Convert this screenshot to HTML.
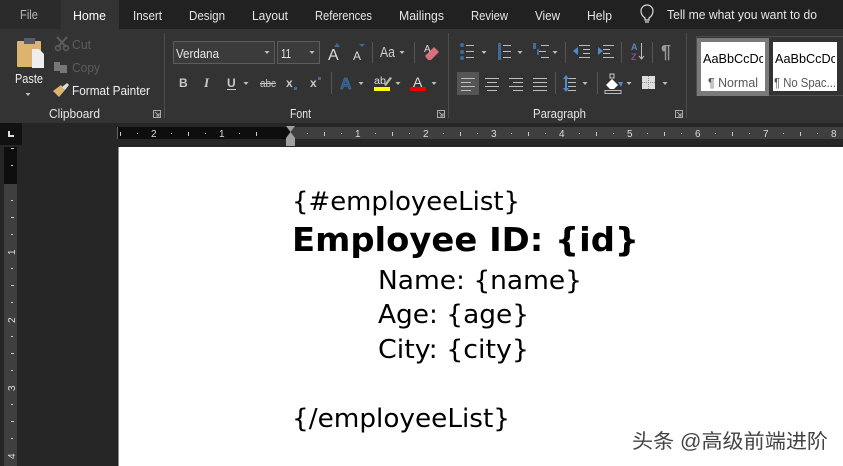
<!DOCTYPE html>
<html><head><meta charset="utf-8"><style>
html,body{margin:0;padding:0;background:#262626;overflow:hidden}
svg{display:block}
text{font-family:"Liberation Sans","Noto Sans CJK SC",sans-serif;fill:#e6e6e6;font-size:13px}
.d{font-family:"DejaVu Sans",sans-serif;fill:#000}
.r{font-size:10px;fill:#ddd}
.l{stroke:#bdbdbd;stroke-width:1;fill:none}
.b{fill:#3f6a9c}
</style></head><body>
<svg xmlns="http://www.w3.org/2000/svg" width="843" height="466" viewBox="0 0 843 466">
<defs><path id="a" d="M0.500 0h5l-2.500 3z" fill="#bdbdbd"/></defs>
<rect width="843" height="466" fill="#262626"/>
<rect width="843" height="29" fill="#212121"/>
<rect width="61" height="29" fill="#2b2b2b"/>
<rect x="61" width="58" height="29" fill="#333"/>
<rect y="29" width="843" height="94" fill="#333"/>
<text x="20" y="19" textLength="18" lengthAdjust="spacingAndGlyphs" style="fill:#b5b5b5">File</text>
<text x="73" y="20" textLength="33" lengthAdjust="spacingAndGlyphs" style="fill:#fff">Home</text>
<text x="133" y="20" textLength="29" lengthAdjust="spacingAndGlyphs">Insert</text>
<text x="189" y="20" textLength="36" lengthAdjust="spacingAndGlyphs">Design</text>
<text x="252" y="20" textLength="36" lengthAdjust="spacingAndGlyphs">Layout</text>
<text x="315" y="20" textLength="57" lengthAdjust="spacingAndGlyphs">References</text>
<text x="399" y="20" textLength="45" lengthAdjust="spacingAndGlyphs">Mailings</text>
<text x="471" y="20" textLength="37" lengthAdjust="spacingAndGlyphs">Review</text>
<text x="535" y="20" textLength="25" lengthAdjust="spacingAndGlyphs">View</text>
<text x="587" y="20" textLength="25" lengthAdjust="spacingAndGlyphs">Help</text>
<text x="667" y="19" textLength="150" lengthAdjust="spacingAndGlyphs">Tell me what you want to do</text>
<path d="M645 18c-3-2-4-4-4-7a6 6 0 0 1 12 0c0 3-1 5-4 7v2h-4zM645 22h4" fill="none" stroke="#ddd" stroke-width="1.2"/>

<!-- clipboard -->
<rect x="17" y="41" width="24" height="26" rx="1" fill="#dcb36f"/>
<rect x="24" y="38" width="11" height="6" fill="#5a5a6a"/>
<path d="M32 49h7l5 5v14H32z" fill="#eee"/>
<text x="15" y="83" textLength="28" lengthAdjust="spacingAndGlyphs" style="fill:#f0f0f0">Paste</text>
<use href="#a" x="25" y="93"/>
<path d="M57 37l9 10M67 37l-9 10" stroke="#5d5d5d" stroke-width="2"/>
<circle cx="58" cy="48" r="2.500" fill="none" stroke="#5d5d5d" stroke-width="1.500"/><circle cx="66" cy="48" r="2.500" fill="none" stroke="#5d5d5d" stroke-width="1.500"/>
<text x="72" y="49" textLength="19" lengthAdjust="spacingAndGlyphs" style="fill:#5d5d5d">Cut</text>
<path d="M54 62h6v9h-6zM60 65h7v8h-7z" fill="#777"/>
<text x="72" y="72" textLength="28" lengthAdjust="spacingAndGlyphs" style="fill:#5d5d5d">Copy</text>
<path d="M53 91l8-6 4 5-6 7z" fill="#dcb36f"/><path d="M62 87l5-4 2 2-4 5z" fill="#ddd"/>
<text x="72" y="95" textLength="78" lengthAdjust="spacingAndGlyphs" style="fill:#f0f0f0">Format Painter</text>
<text x="49" y="118" textLength="51" lengthAdjust="spacingAndGlyphs">Clipboard</text>
<path d="M153.500 110.500h7v7h-7zM155 112l4 4M159 113v3h-3" fill="none" stroke="#aaa"/>
<rect x="164" y="33" width="1" height="85" fill="#4d4d4d"/>

<!-- font -->
<rect x="173.500" y="41.500" width="101" height="22" fill="#3b3b3b" stroke="#5c5c5c"/>
<text x="176" y="58" textLength="43" lengthAdjust="spacingAndGlyphs">Verdana</text>
<use href="#a" x="264" y="51"/>
<rect x="277.500" y="41.500" width="42" height="22" fill="#3b3b3b" stroke="#5c5c5c"/>
<text x="281" y="58" textLength="10" lengthAdjust="spacingAndGlyphs">11</text>
<use href="#a" x="309" y="51"/>
<text x="328" y="60" style="font-size:16px;fill:#ddd">A</text>
<path d="M334 47l3-4 3 4z" class="b"/>
<text x="353" y="60" style="font-size:12px;fill:#ddd">A</text>
<path d="M359 44h6l-3 3z" class="b"/>
<rect x="372" y="42" width="1" height="21" fill="#555"/>
<text x="380" y="57" textLength="15" lengthAdjust="spacingAndGlyphs" style="font-size:15px;fill:#ccc">Aa</text>
<use href="#a" x="399" y="51"/>
<rect x="414" y="42" width="1" height="21" fill="#555"/>
<path d="M425 56l9-9 5 5-8 8h-3z" fill="#d9707f"/>
<text x="424" y="52" style="font-size:10px;fill:#ddd">A</text>
<text x="179" y="87" style="font-size:12px;font-weight:700;fill:#c9c9c9">B</text>
<text x="204" y="87" style="font-size:13px;font-style:italic;font-family:'Liberation Serif';font-weight:700;fill:#c9c9c9">I</text>
<text x="227" y="87" style="font-size:12px;font-weight:700;fill:#c9c9c9">U</text>
<rect x="227" y="89" width="9" height="1" fill="#c9c9c9"/>
<use href="#a" x="243" y="82"/>
<text x="260" y="87" textLength="16" lengthAdjust="spacingAndGlyphs" style="font-size:11px;fill:#c9c9c9">abc</text>
<rect x="260" y="83" width="16" height="1" fill="#c9c9c9"/>
<text x="286" y="87" style="font-size:12px;font-weight:700;fill:#c9c9c9">x</text><rect x="294" y="87" width="3" height="3" class="b"/>
<text x="310" y="87" style="font-size:12px;font-weight:700;fill:#c9c9c9">x</text><rect x="318" y="77" width="3" height="3" class="b"/>
<rect x="331" y="72" width="1" height="22" fill="#555"/>
<text x="340" y="89" style="font-size:16px;font-weight:700;fill:#2f5b90;stroke:#4a78ad;stroke-width:.5">A</text>
<use href="#a" x="358" y="82"/>
<text x="374" y="84" textLength="12" lengthAdjust="spacingAndGlyphs" style="font-size:10px;fill:#ddd">ab</text>
<path d="M384 85l6-8 2 1-6 8z" fill="#bbb"/>
<rect x="374" y="87" width="16" height="4" fill="#ff0"/>
<use href="#a" x="395" y="82"/>
<text x="413" y="87" style="font-size:14px;fill:#ddd">A</text>
<rect x="410" y="87" width="16" height="4" fill="#e00"/>
<use href="#a" x="431" y="82"/>
<text x="290" y="118" textLength="21" lengthAdjust="spacingAndGlyphs">Font</text>
<path d="M437.500 110.500h7v7h-7zM439 112l4 4M443 113v3h-3" fill="none" stroke="#aaa"/>
<rect x="448" y="33" width="1" height="85" fill="#4d4d4d"/>

<!-- paragraph -->
<path d="M466 45.500h8M466 51.500h8M466 57.500h8M503 45.500h8M503 51.500h8M503 57.500h8M541 45.500h8M538 51.500h8M541 57.500h8" class="l"/>
<circle cx="462" cy="45" r="2" class="b"/><circle cx="462" cy="52" r="2" class="b"/><circle cx="462" cy="58" r="2" class="b"/>
<rect x="498" y="43" width="3" height="17" class="b"/>
<rect x="533" y="43" width="3" height="6" class="b"/><rect x="537" y="49" width="2" height="6" class="b"/>
<use href="#a" x="481" y="51"/><use href="#a" x="517" y="51"/><use href="#a" x="552" y="51"/>
<rect x="565" y="42" width="1" height="21" fill="#555"/>
<path d="M579 45.500h11M583 49.500h7M583 53.500h7M579 57.500h11" class="l"/><path d="M573 51l5-4v8z" fill="#4d8ccc"/>
<path d="M603 45.500h11M603 49.500h7M603 53.500h7M603 57.500h11" class="l"/><path d="M598 47l5 4-5 4z" fill="#4d8ccc"/>
<rect x="621" y="42" width="1" height="21" fill="#555"/>
<text x="631" y="50" style="font-size:9px;fill:#5a86c0;font-weight:700">A</text>
<text x="631" y="60" style="font-size:9px;fill:#8a4a92;font-weight:700">Z</text>
<path d="M641.500 43v16M639 56l2.500 3 2.500-3" class="l"/>
<rect x="652" y="42" width="1" height="21" fill="#555"/>
<text x="661" y="58" style="font-size:18px;font-weight:700;fill:#999">¶</text>
<rect x="457" y="72" width="22" height="23" fill="#555"/>
<path d="M461 78.500h14M461 82.500h10M461 86.500h14M461 90.500h10" class="l"/>
<path d="M485 78.500h14M487 82.500h10M485 86.500h14M487 90.500h10" class="l"/>
<path d="M509 78.500h14M513 82.500h10M509 86.500h14M513 90.500h10" class="l"/>
<path d="M533 78.500h14M533 82.500h14M533 86.500h14M533 90.500h14" class="l"/>
<rect x="555" y="72" width="1" height="22" fill="#555"/>
<path d="M568 78.500h8M568 82.500h8M568 86.500h8M568 90.500h8" class="l"/><path d="M566 75l-3 4h6zM566 92l-3-4h6z" fill="#4d8ccc"/><rect x="565" y="78" width="2" height="11" fill="#4d8ccc"/>
<use href="#a" x="582" y="82"/>
<rect x="597" y="72" width="1" height="22" fill="#555"/>
<path d="M606 85l6-6 6 6-4 4h-4z" fill="#fff"/><path d="M610 74h4v4h-4z" fill="none" stroke="#ccc"/><path d="M618 82h5l-2 5z" fill="#4d8ccc"/>
<rect x="605" y="90.500" width="16" height="3" fill="none" stroke="#bbb"/>
<use href="#a" x="626" y="82"/>
<rect x="642" y="76" width="13" height="13" fill="#ddd"/><path d="M648.500 76v13M642 82.500h13" stroke="#888" stroke-dasharray="1 1"/>
<use href="#a" x="662" y="82"/>
<text x="533" y="118" textLength="53" lengthAdjust="spacingAndGlyphs">Paragraph</text>
<path d="M675.500 110.500h7v7h-7zM677 112l4 4M681 113v3h-3" fill="none" stroke="#aaa"/>
<rect x="686" y="33" width="1" height="85" fill="#4d4d4d"/>

<!-- styles -->
<rect x="696.500" y="36.500" width="147" height="59" fill="none" stroke="#4d4d4d"/>
<rect x="697" y="38" width="72" height="58" fill="#7a7a7a"/>
<rect x="701" y="42" width="64" height="49" fill="#fff"/>
<rect x="773" y="42" width="64" height="49" fill="#fff"/>
<svg x="701" y="42" width="62" height="49"><text x="2" y="21" textLength="62" lengthAdjust="spacingAndGlyphs" style="fill:#000;font-size:13px">AaBbCcDc</text>
<text x="7" y="45" textLength="50" lengthAdjust="spacingAndGlyphs" style="fill:#555;font-size:13px">¶ Normal</text></svg>
<svg x="773" y="42" width="62" height="49"><text x="2" y="21" textLength="62" lengthAdjust="spacingAndGlyphs" style="fill:#000;font-size:13px">AaBbCcDc</text>
<text x="1" y="45" textLength="62" lengthAdjust="spacingAndGlyphs" style="fill:#555;font-size:13px">¶ No Spac...</text></svg>

<!-- rulers -->
<rect y="123" width="843" height="24" fill="#262626"/>
<rect y="123" width="22" height="22" fill="#111"/>
<path d="M8 131v6h6v-2h-4v-4z" fill="#ddd"/>
<rect x="117" y="127" width="726" height="12" fill="#3f3f3f"/>
<rect x="117" y="127" width="173" height="12" fill="#0e0e0e"/>
<rect x="117" y="127" width="1" height="12" fill="#666"/>
<g fill="#c8c8c8">
<path d="M120 132h1v4h-1zM188 132h1v4h-1zM256 132h1v4h-1zM324 132h1v4h-1zM392 132h1v4h-1zM460 132h1v4h-1zM528 132h1v4h-1zM596 132h1v4h-1zM664 132h1v4h-1zM732 132h1v4h-1zM800 132h1v4h-1z"/>
<path d="M137 133h1v1h-1zM171 133h1v1h-1zM205 133h1v1h-1zM239 133h1v1h-1zM307 133h1v1h-1zM341 133h1v1h-1zM375 133h1v1h-1zM409 133h1v1h-1zM443 133h1v1h-1zM477 133h1v1h-1zM511 133h1v1h-1zM545 133h1v1h-1zM579 133h1v1h-1zM613 133h1v1h-1zM647 133h1v1h-1zM681 133h1v1h-1zM715 133h1v1h-1zM749 133h1v1h-1zM783 133h1v1h-1zM817 133h1v1h-1z"/>
</g>
<text x="151" y="137" class="r">2</text><text x="219" y="137" class="r">1</text>
<text x="355" y="137" class="r">1</text><text x="423" y="137" class="r">2</text><text x="491" y="137" class="r">3</text>
<text x="559" y="137" class="r">4</text><text x="627" y="137" class="r">5</text><text x="695" y="137" class="r">6</text>
<text x="763" y="137" class="r">7</text><text x="831" y="137" class="r">8</text>
<path d="M286 126h9l-4.500 6 4.500 6v2h-9v-2l4.500-6z" fill="#a0a0a0"/><rect x="286" y="140" width="9" height="6" fill="#a0a0a0"/>

<rect x="4" y="147" width="13" height="319" fill="#3f3f3f"/>
<rect x="4" y="147" width="13" height="37" fill="#0e0e0e"/>
<g fill="#ccc">
<path d="M11 148h3v1h-3zM11 165h2v1h-2zM11 200h2v1h-2zM11 217h3v1h-3zM11 234h2v1h-2zM11 268h2v1h-2zM11 285h3v1h-3zM11 302h2v1h-2zM11 336h2v1h-2zM11 353h3v1h-3zM11 370h2v1h-2zM11 404h2v1h-2zM11 421h3v1h-3zM11 438h2v1h-2z"/>
</g>
<text transform="translate(15 255) rotate(-90)" class="r">1</text>
<text transform="translate(15 323) rotate(-90)" class="r">2</text>
<text transform="translate(15 391) rotate(-90)" class="r">3</text>
<text transform="translate(15 459) rotate(-90)" class="r">4</text>

<!-- page -->
<rect x="118" y="147" width="725" height="319" fill="#fff"/>
<rect x="118" y="147" width="1" height="319" fill="#8a8a8a"/>
<text class="d" x="292" y="210" textLength="228" lengthAdjust="spacingAndGlyphs" style="font-size:26px;fill:#000">{#employeeList}</text>
<text class="d" x="292" y="251" textLength="347" lengthAdjust="spacingAndGlyphs" style="font-size:33px;font-weight:700;fill:#000">Employee ID: {id}</text>
<text class="d" x="378" y="289" textLength="204" lengthAdjust="spacingAndGlyphs" style="font-size:26px;fill:#000">Name: {name}</text>
<text class="d" x="378" y="323" textLength="151" lengthAdjust="spacingAndGlyphs" style="font-size:26px;fill:#000">Age: {age}</text>
<text class="d" x="378" y="358" textLength="151" lengthAdjust="spacingAndGlyphs" style="font-size:26px;fill:#000">City: {city}</text>
<text class="d" x="292" y="427" textLength="218" lengthAdjust="spacingAndGlyphs" style="font-size:26px;fill:#000">{/employeeList}</text>
<text x="632" y="448" textLength="196" lengthAdjust="spacingAndGlyphs" style="font-size:20px;fill:#444">头条 @高级前端进阶</text>
</svg>
</body></html>
